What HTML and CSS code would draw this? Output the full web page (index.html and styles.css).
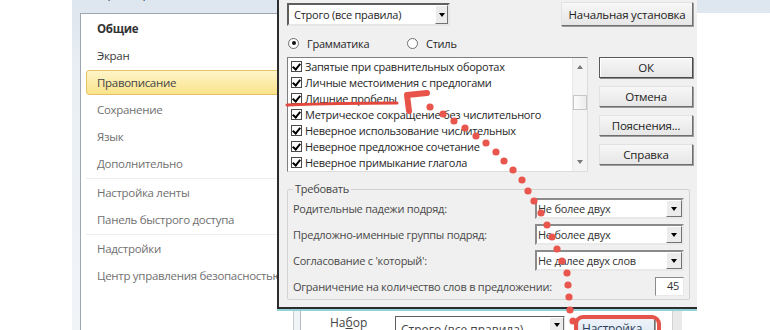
FILE: index.html
```html
<!DOCTYPE html>
<html lang="ru">

<head>
    <meta charset="UTF-8">
    <meta name="viewport" content="width=device-width, initial-scale=1.0">
    <title>Параметры Word — Правописание</title>
    <link rel="stylesheet" href="styles.css">
</head>

<body>
    <div class="janela">
        <div class="titulo">Параметры Word</div>
        <div class="corpo">
            <ul class="menu">
                <li class="item forte">Общие</li>
                <li class="item escuro">Экран</li>
                <li class="item ativo">Правописание</li>
                <li class="item">Сохранение</li>
                <li class="item">Язык</li>
                <li class="item">Дополнительно</li>
                <li class="sep"></li>
                <li class="item">Настройка ленты</li>
                <li class="item">Панель быстрого доступа</li>
                <li class="sep"></li>
                <li class="item">Надстройки</li>
                <li class="item">Центр управления безопасностью</li>
            </ul>
            <div class="conteudo">
                <div class="conjunto">
                    <span class="rotulo">На<u>б</u>ор</span>
                    <div class="combo largo"><span class="texto">Строго (все правила)</span><span class="seta"></span></div>
                    <button class="botao fundo">Настройка...</button>
                </div>
                <div class="rolagem"></div>
            </div>
        </div>
    </div>

    <div class="dialogo">
        <div class="topo">
            <div class="combo">Строго (все правила)<span class="seta"></span></div>
            <button class="botao">Начальная установка</button>
        </div>
        <div class="opcoes">
            <label class="radio"><span class="bola marcada"></span>Грамматика</label>
            <label class="radio"><span class="bola"></span>Стиль</label>
        </div>
        <div class="meio">
            <div class="lista">
                <ul class="itens">
                    <li><span class="caixa"></span>Запятые при сравнительных оборотах</li>
                    <li><span class="caixa"></span>Личные местоимения с предлогами</li>
                    <li><span class="caixa"></span>Лишние пробелы</li>
                    <li><span class="caixa"></span>Метрическое сокращение без числительного</li>
                    <li><span class="caixa"></span>Неверное использование числительных</li>
                    <li><span class="caixa"></span>Неверное предложное сочетание</li>
                    <li><span class="caixa"></span>Неверное примыкание глагола</li>
                </ul>
                <div class="barra">
                    <span class="cima"></span>
                    <span class="cursor"></span>
                    <span class="baixo"></span>
                </div>
            </div>
            <div class="botoes">
                <button class="botao padrao">ОК</button>
                <button class="botao">Отмена</button>
                <button class="botao">Пояснения...</button>
                <button class="botao">Справка</button>
            </div>
        </div>
        <fieldset class="grupo">
            <legend>Требовать</legend>
            <div class="campo">
                <span>Родительные падежи подряд:</span>
                <div class="selecao">Не более двух<span class="seta"></span></div>
            </div>
            <div class="campo">
                <span>Предложно-именные группы подряд:</span>
                <div class="selecao">Не более двух<span class="seta"></span></div>
            </div>
            <div class="campo">
                <span>Согласование с 'который':</span>
                <div class="selecao">Не далее двух слов<span class="seta"></span></div>
            </div>
            <div class="campo">
                <span>Ограничение на количество слов в предложении:</span>
                <div class="numero">45</div>
            </div>
        </fieldset>
    </div>

    <svg class="marcas" width="770" height="330" viewBox="0 0 770 330">
        <path d="M287 105 Q340 103 397 103" fill="none" stroke="#e2483e" stroke-width="3" stroke-linecap="round" />
        <path d="M409 111 L407 95 L427 93" fill="none" stroke="#e8544a" stroke-width="6" stroke-linecap="round" stroke-linejoin="round" />
        <g fill="#e8564d">
            <circle cx="430" cy="107" r="3.6" />
            <circle cx="443" cy="114" r="3.6" />
            <circle cx="454" cy="121" r="3.6" />
            <circle cx="465" cy="128" r="3.6" />
            <circle cx="476" cy="136" r="3.6" />
            <circle cx="486" cy="143" r="3.6" />
            <circle cx="496" cy="152" r="3.6" />
            <circle cx="504" cy="161" r="3.6" />
            <circle cx="513" cy="170" r="3.6" />
            <circle cx="522" cy="180" r="3.6" />
            <circle cx="528" cy="191" r="3.6" />
            <circle cx="534" cy="201" r="3.6" />
            <circle cx="541" cy="213" r="3.6" />
            <circle cx="547" cy="225" r="3.6" />
            <circle cx="552" cy="237" r="3.6" />
            <circle cx="557" cy="249" r="3.6" />
            <circle cx="562" cy="261" r="3.6" />
            <circle cx="567" cy="273" r="3.6" />
            <circle cx="568" cy="285" r="3.6" />
            <circle cx="569" cy="297" r="3.6" />
            <circle cx="570" cy="310" r="3.6" />
            <circle cx="573" cy="321" r="3.6" />
        </g>
        <rect x="576" y="317" width="83" height="30" rx="7" fill="none" stroke="#e4544a" stroke-width="4" />
    </svg>
</body>

</html>
```

FILE: styles.css
```css
* {
    margin: 0;
    padding: 0;
    box-sizing: border-box;
}

body {
    position: relative;
    width: 770px;
    height: 330px;
    overflow: hidden;
    background: #fff;
    font-family: 'Open Sans', 'Noto Sans', sans-serif;
    color: #222;
}

/* janela de fundo (Параметры Word) */
.janela {
    display: flex;
    flex-direction: column;
    height: 330px;
    margin-left: 72px;
    background: linear-gradient(#dde5ee, #eaeff4 80px, #f1f4f7);
}

.titulo {
    flex: none;
    height: 25px;
    margin-top: -12px;
    padding-left: 20px;
    font-size: 12px;
    line-height: 12px;
    color: #1e395b;
}

.corpo {
    display: flex;
    flex: 1;
    min-height: 0;
    overflow: hidden;
    padding-left: 8px;
}

.menu {
    flex: none;
    width: 214px;
    list-style: none;
    padding-top: 2px;
    background: #fff;
    border-top: 1px solid #9ea6b1;
    border-left: 1px solid #9ea6b1;
    border-right: 1px solid #c6ccd3;
    font-size: 11.5px;
    letter-spacing: -0.3px;
}

.item {
    height: 25px;
    line-height: 23px;
    margin: 0 0 2px 5px;
    padding-left: 10px;
    border: 1px solid transparent;
    border-radius: 3px;
    color: #707070;
    white-space: nowrap;
}

.forte {
    font-weight: bold;
    color: #333;
}

.escuro {
    color: #3a3a3a;
}

.ativo {
    border-color: #e6c264;
    background: linear-gradient(#fdf4c9, #fbe38a);
    color: #454545;
}

.sep {
    height: 1px;
    margin: 0 0 1px 5px;
    background: #eceef1;
}

.conteudo {
    display: flex;
    flex: 1;
    margin-left: 6px;
    background: #fff;
    border-left: 1px solid #b3bac3;
}

.conjunto {
    display: flex;
    flex: 1;
    align-items: flex-start;
    padding: 302px 0 0 29px;
    font-size: 12px;
    color: #444;
}

.rotulo {
    width: 65px;
    line-height: 14px;
    margin-top: 1px;
}

.rolagem {
    width: 10px;
    margin-right: 88px;
    background: #e9e9e9;
    border-left: 1px solid #d2d2d2;
}

/* dialogo de gramatica */
.dialogo {
    position: absolute;
    left: 277px;
    top: -6px;
    width: 420px;
    height: 315px;
    padding: 9px 4px 0 8px;
    background: #f0f0f0;
    border-left: 2px solid #2c2c2c;
    border-bottom: 2px solid #2c2c2c;
    box-shadow: 0 2px 0 #93d3d7;
    font-size: 11px;
    letter-spacing: -0.25px;
    color: #262626;
}

.topo {
    display: flex;
    justify-content: space-between;
    align-items: flex-start;
}

.combo {
    display: flex;
    align-items: center;
    width: 163px;
    height: 23px;
    padding-left: 5px;
    background: #fff;
    border: 2px solid;
    border-color: #5e5e5e #e6e6e6 #e6e6e6 #5e5e5e;
    white-space: nowrap;
}

.combo.largo {
    align-items: flex-start;
    width: 170px;
    height: 24px;
    margin-top: 1px;
    border-width: 1px;
    font-size: 12px;
}

.texto {
    margin-top: 4px;
}

.seta {
    display: flex;
    align-items: center;
    justify-content: center;
    align-self: stretch;
    width: 13px;
    margin-left: auto;
    background: #ececec;
    border: 1px solid;
    border-color: #fff #727272 #727272 #fff;
}

.seta::after {
    content: "";
    border-left: 3.5px solid transparent;
    border-right: 3.5px solid transparent;
    border-top: 4px solid #000;
}

.combo.largo .seta {
    width: 15px;
    height: 16px;
    align-self: flex-start;
}

.botao {
    height: 24px;
    padding: 0;
    font: inherit;
    font-size: 11.5px;
    letter-spacing: -0.2px;
    white-space: nowrap;
    color: #222;
    background: linear-gradient(#f7f7f7, #e6e6e6);
    border: 1px solid;
    border-color: #e2e2e2 #6f6f6f #6f6f6f #e2e2e2;
    box-shadow: 1px 1px 0 #9c9c9c;
}

.topo .botao {
    width: 132px;
    margin-top: -1px;
}

.botao.fundo {
    width: 77px;
    height: 20px;
    margin: 3px 0 0 13px;
    font-size: 12px;
    color: #2b3d58;
    background: linear-gradient(#eef3f9, #dde6f1);
}

.opcoes {
    display: flex;
    align-items: center;
    height: 16px;
    margin-top: 9px;
    padding-left: 1px;
}

.radio {
    display: flex;
    align-items: center;
    gap: 8px;
}

.radio:first-child {
    width: 119px;
}

.bola {
    display: flex;
    align-items: center;
    justify-content: center;
    width: 11px;
    height: 11px;
    border-radius: 50%;
    border: 1px solid #6f6f6f;
    background: #fff;
}

.bola.marcada::after {
    content: "";
    width: 4px;
    height: 4px;
    border-radius: 50%;
    background: #111;
}

.meio {
    display: flex;
    gap: 11px;
    margin-top: 6px;
}

.lista {
    display: flex;
    width: 301px;
    height: 115px;
    background: #fff;
    border: 1px solid;
    border-color: #7e7e7e #dcdcdc #dcdcdc #7e7e7e;
}

.itens {
    flex: 1;
    list-style: none;
}

.itens li {
    display: flex;
    align-items: center;
    gap: 3px;
    height: 16px;
    padding-left: 3px;
    white-space: nowrap;
}

.caixa {
    display: flex;
    justify-content: center;
    width: 11px;
    height: 11px;
    border: 1px solid #4a4a4a;
    background: #fff;
}

.caixa::after {
    content: "";
    width: 3px;
    height: 6px;
    margin-top: 0.5px;
    border-right: 2px solid #000;
    border-bottom: 2px solid #000;
    transform: rotate(40deg);
}

.barra {
    display: flex;
    flex-direction: column;
    align-items: center;
    width: 15px;
    padding: 7px 0 7px;
    background: #f4f4f4;
    border-left: 1px solid #e8e8e8;
}

.cima,
.baixo {
    border-left: 3px solid transparent;
    border-right: 3px solid transparent;
}

.cima {
    border-bottom: 4px solid #7a7a7a;
}

.baixo {
    margin-top: auto;
    border-top: 4px solid #7a7a7a;
}

.cursor {
    width: 14px;
    height: 15px;
    margin-top: 26px;
    background: linear-gradient(90deg, #fbfbfb, #ececec);
    border: 1px solid #c6c6c6;
}

.botoes {
    display: flex;
    flex-direction: column;
    gap: 8px;
    width: 94px;
}

.botoes .botao {
    height: 21px;
}

.botao.padrao {
    border-color: #5a5a5a #4a4a4a #4a4a4a #5a5a5a;
    box-shadow: inset 1px 1px 0 #fff, 1px 1px 0 #8a8a8a;
}

.grupo {
    margin: 9px 3px 0 0;
    padding: 1px 5px 2px;
    border: 1px solid #d3d3d3;
    border-radius: 2px;
}

.grupo legend {
    padding: 0 2px;
    line-height: 16px;
    color: #444;
}

.campo {
    display: flex;
    align-items: center;
    justify-content: space-between;
    height: 21px;
    color: #4a4a4a;
}

.campo + .campo {
    margin-top: 5px;
}

.selecao {
    display: flex;
    align-items: center;
    width: 149px;
    height: 21px;
    padding-left: 1px;
    background: #fff;
    border: 2px solid;
    border-color: #8a8a8a #e9e9e9 #e9e9e9 #8a8a8a;
    color: #333;
}

.selecao .seta {
    width: 16px;
}

.numero {
    width: 29px;
    height: 19px;
    padding-right: 4px;
    text-align: right;
    line-height: 16px;
    background: #fff;
    border: 1px solid;
    border-color: #8a8a8a #e9e9e9 #e9e9e9 #8a8a8a;
    color: #333;
}

/* anotacoes vermelhas */
.marcas {
    position: absolute;
    top: 0;
    left: 0;
    pointer-events: none;
}
```
